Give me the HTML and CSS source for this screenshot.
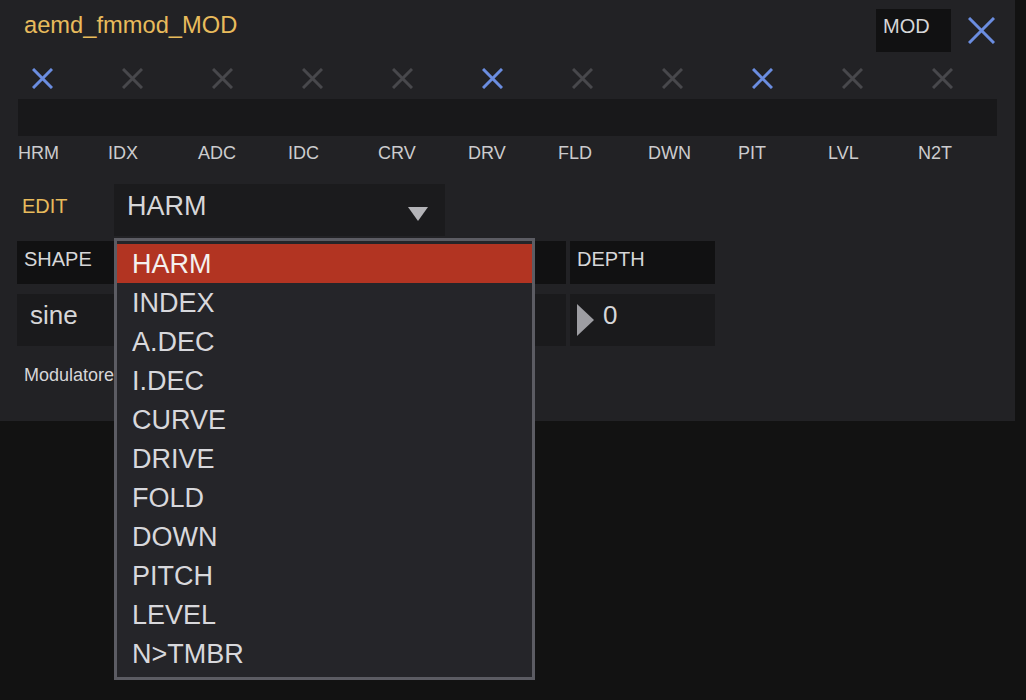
FILE: index.html
```html
<!DOCTYPE html>
<html>

<head>
    <meta charset="utf-8">
    <meta name='viewport' content='width=device-width initial-scale=1'>
    <title>aemd_fmmod_MOD</title>
    <link rel="stylesheet" href="styles.css">
</head>

<body>
    <div class="panel">
        <header class="head">
            <h1 class="title">aemd_fmmod_MOD</h1>
            <div class="mod_box">MOD</div>
            <svg class="close" width="27" height="27" viewBox="0 0 27 27">
                <path d="M1 1 L26 26 M26 1 L1 26" />
            </svg>
        </header>

        <div class="toggles">
            <span class="toggle on"><svg viewBox="0 0 21 21"><path d="M1 1 L20 20 M20 1 L1 20" /></svg></span>
            <span class="toggle"><svg viewBox="0 0 21 21"><path d="M1 1 L20 20 M20 1 L1 20" /></svg></span>
            <span class="toggle"><svg viewBox="0 0 21 21"><path d="M1 1 L20 20 M20 1 L1 20" /></svg></span>
            <span class="toggle"><svg viewBox="0 0 21 21"><path d="M1 1 L20 20 M20 1 L1 20" /></svg></span>
            <span class="toggle"><svg viewBox="0 0 21 21"><path d="M1 1 L20 20 M20 1 L1 20" /></svg></span>
            <span class="toggle on"><svg viewBox="0 0 21 21"><path d="M1 1 L20 20 M20 1 L1 20" /></svg></span>
            <span class="toggle"><svg viewBox="0 0 21 21"><path d="M1 1 L20 20 M20 1 L1 20" /></svg></span>
            <span class="toggle"><svg viewBox="0 0 21 21"><path d="M1 1 L20 20 M20 1 L1 20" /></svg></span>
            <span class="toggle on"><svg viewBox="0 0 21 21"><path d="M1 1 L20 20 M20 1 L1 20" /></svg></span>
            <span class="toggle"><svg viewBox="0 0 21 21"><path d="M1 1 L20 20 M20 1 L1 20" /></svg></span>
            <span class="toggle"><svg viewBox="0 0 21 21"><path d="M1 1 L20 20 M20 1 L1 20" /></svg></span>
        </div>
        <div class="bar"></div>
        <div class="labels">
            <span>HRM</span>
            <span>IDX</span>
            <span>ADC</span>
            <span>IDC</span>
            <span>CRV</span>
            <span>DRV</span>
            <span>FLD</span>
            <span>DWN</span>
            <span>PIT</span>
            <span>LVL</span>
            <span>N2T</span>
        </div>

        <div class="edit_row">
            <span class="edit_label">EDIT</span>
            <div class="select_wrap">
                <div class="select">
                    <span class="select_value">HARM</span>
                    <span class="arrow_down"></span>
                </div>
                <ul class="menu">
                    <li class="selected">HARM</li>
                    <li>INDEX</li>
                    <li>A.DEC</li>
                    <li>I.DEC</li>
                    <li>CURVE</li>
                    <li>DRIVE</li>
                    <li>FOLD</li>
                    <li>DOWN</li>
                    <li>PITCH</li>
                    <li>LEVEL</li>
                    <li>N&gt;TMBR</li>
                </ul>
            </div>
        </div>

        <div class="params">
            <div class="param_head">SHAPE</div>
            <div class="param_head">PHASE</div>
            <div class="param_head">RATE</div>
            <div class="param_head">DEPTH</div>
            <div class="param_value">sine</div>
            <div class="param_value">0</div>
            <div class="param_value">1</div>
            <div class="param_value"><span class="arrow_right"></span>0</div>
        </div>

        <p class="note">Modulatore</p>
    </div>
</body>

</html>
```

FILE: styles.css
```css
html {
    background-color: rgb(18, 18, 18);
}

body {
    margin: 0;
    min-height: 700px;
    font-family: "Liberation Sans", Arial, sans-serif;
    color: rgb(214, 214, 216);
}

.panel {
    position: relative;
    width: 1015px;
    height: 421px;
    box-sizing: border-box;
    padding: 0 18px 0 17px;
    background-color: rgb(34, 34, 37);
}

/* header */

.head {
    display: flex;
    align-items: flex-start;
    height: 52px;
    box-sizing: border-box;
    padding-top: 9px;
}

.title {
    margin: 2px 0 0 7px;
    font-size: 23.7px;
    font-weight: normal;
    line-height: 28px;
    color: rgb(232, 187, 92);
}

.mod_box {
    margin-left: auto;
    width: 75px;
    height: 43px;
    box-sizing: border-box;
    padding: 5px 7px;
    font-size: 20px;
    line-height: 24px;
    background-color: rgb(17, 17, 18);
}

.close {
    margin: 8px 2px 0 17px;
    stroke: rgb(107, 141, 224);
    stroke-width: 3;
    fill: none;
}

/* toggles */

.toggles,
.labels {
    display: grid;
    grid-template-columns: repeat(11, 90px);
    margin-left: 1px;
}

.toggles {
    margin-top: 16px;
    height: 21px;
}

.toggle svg {
    display: block;
    width: 21px;
    height: 21px;
    margin-left: 14px;
    stroke: rgb(72, 72, 76);
    stroke-width: 3;
    fill: none;
}

.toggle.on svg {
    stroke: rgb(107, 141, 224);
}

.bar {
    margin: 10px 0 0 1px;
    height: 37px;
    background-color: rgb(24, 24, 26);
}

.labels {
    margin-top: 7px;
    font-size: 18px;
    line-height: 20px;
    color: rgb(204, 204, 206);
}

/* edit */

.edit_row {
    display: flex;
    margin-top: 21px;
    height: 52px;
}

.edit_label {
    flex: 0 0 97px;
    box-sizing: border-box;
    padding: 10px 0 0 5px;
    font-size: 20px;
    line-height: 24px;
    color: rgb(232, 187, 92);
}

.select_wrap {
    position: relative;
}

.select {
    display: flex;
    width: 331px;
    height: 52px;
    box-sizing: border-box;
    padding: 6px 17px 0 13px;
    background-color: rgb(27, 27, 29);
}

.select_value {
    font-size: 27px;
    line-height: 32px;
}

.arrow_down {
    align-self: center;
    margin: 1px 0 0 auto;
    width: 0;
    height: 0;
    border-left: 10px solid transparent;
    border-right: 10px solid transparent;
    border-top: 14px solid rgb(180, 180, 184);
}

.menu {
    position: absolute;
    top: calc(100% + 2px);
    left: 0;
    z-index: 2;
    width: 421px;
    box-sizing: border-box;
    margin: 0;
    padding: 3px 0 4px 0;
    list-style: none;
    border: 3px solid rgb(92, 92, 99);
    background-color: rgb(37, 37, 41);
}

.menu li {
    height: 39px;
    padding-left: 15px;
    font-size: 27px;
    line-height: 41px;
    color: rgb(216, 216, 220);
}

.menu li.selected {
    background-color: rgb(178, 52, 34);
    color: rgb(244, 240, 238);
}

/* params */

.params {
    display: grid;
    grid-template-columns: 251px 145px 145px 145px;
    grid-template-rows: 43px 52px;
    column-gap: 4px;
    row-gap: 10px;
    margin-top: 5px;
}

.param_head {
    box-sizing: border-box;
    padding: 6px 7px 0 7px;
    font-size: 20px;
    line-height: 24px;
    background-color: rgb(17, 17, 18);
}

.param_value {
    display: flex;
    align-items: flex-start;
    box-sizing: border-box;
    padding: 6px 13px 0 13px;
    font-size: 26px;
    line-height: 30px;
    background-color: rgb(26, 26, 28);
}

.param_value:last-child {
    padding-left: 7px;
}

.arrow_right {
    align-self: center;
    margin: -6px 9px 0 0;
    width: 0;
    height: 0;
    border-top: 16px solid transparent;
    border-bottom: 16px solid transparent;
    border-left: 17px solid rgb(158, 158, 163);
}

.note {
    margin: 18px 0 0 7px;
    font-size: 18px;
    line-height: 22px;
    color: rgb(214, 214, 216);
}
```
